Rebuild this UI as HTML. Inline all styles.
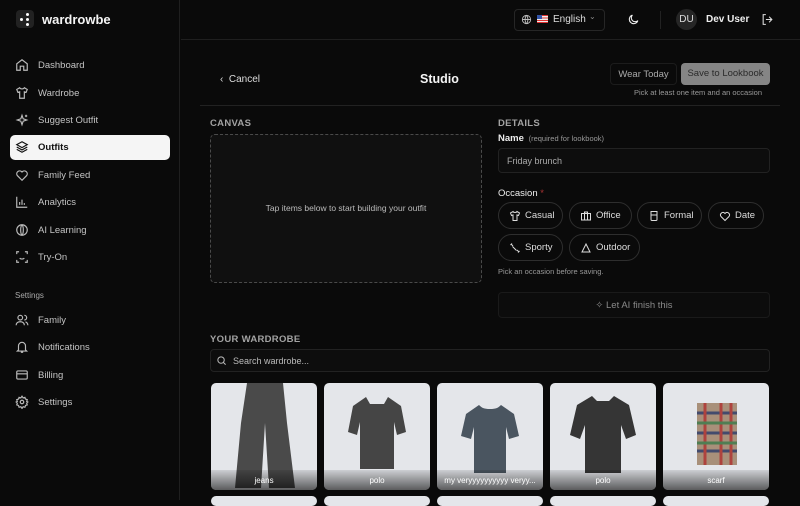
<!DOCTYPE html>
<html><head><meta charset="utf-8"><style>
*{box-sizing:border-box;margin:0;padding:0}
body{width:800px;height:500px;overflow:hidden;background:#0a0a0a;font-family:"Liberation Sans",sans-serif;color:#e5e5e5;position:relative}
.sb{position:absolute;left:0;top:0;width:180px;height:500px;border-right:1px solid #1f1f1f;background:#0a0a0a}
.logo{position:absolute;left:16px;top:10px;width:18px;height:18px;background:#222;border-radius:4px}
.brand{position:absolute;left:42px;top:12px;font-size:13px;font-weight:bold;color:#f5f5f5}
.nav{position:absolute;left:10px;width:160px;height:25px;border-radius:5px;font-size:9.5px;color:#c4c4c4;line-height:25px;padding-left:28px}
.nav svg{position:absolute;left:5px;top:5px}
.nav.act{background:#f5f5f5;color:#111;font-weight:bold}
.hdr{position:absolute;left:181px;top:0;right:0;height:40px;border-bottom:1px solid #1f1f1f}
.txt{position:absolute;white-space:nowrap}
.lbl{font-size:9.5px;font-weight:bold;color:#a3a3a3;letter-spacing:.3px}
.chip{position:absolute;height:27px;border:1px solid #2e2e2e;border-radius:14px;font-size:9.5px;color:#ddd;line-height:25px;padding-left:26px}
.chip svg{position:absolute;left:10px;top:7px}
.card{position:absolute;top:383px;width:106px;height:107px;border-radius:5px;background:#e4e6ea;overflow:hidden}
.card .cap{position:absolute;left:0;right:0;bottom:0;height:20px;background:linear-gradient(rgba(0,0,0,.1),rgba(0,0,0,.6));color:#fff;font-size:8px;text-align:center;line-height:22px}
.card2{position:absolute;top:496px;width:106px;height:10px;border-radius:5px;background:#e4e6ea}
</style></head><body>
<div class="sb">
 <div class="logo"><div style="position:absolute;left:4px;top:8px;width:3px;height:3px;background:#fff;border-radius:50%"></div><div style="position:absolute;left:10px;top:3px;width:3px;height:3px;background:#fff;border-radius:50%"></div><div style="position:absolute;left:10px;top:8px;width:3px;height:3px;background:#fff;border-radius:50%"></div><div style="position:absolute;left:10px;top:13px;width:3px;height:3px;background:#fff;border-radius:50%"></div></div>
 <div class="brand">wardrowbe</div>
 <div class="nav" style="top:53px"><svg width="14" height="14" viewBox="0 0 24 24" fill="none" stroke="#bbb" stroke-width="2"><path d="M3 10l9-7 9 7v11H15v-7H9v7H3z"/></svg>Dashboard</div>
 <div class="nav" style="top:81px"><svg width="14" height="14" viewBox="0 0 24 24" fill="none" stroke="#bbb" stroke-width="2"><path d="M8 3l-5 3 2 5 3-1v11h8V10l3 1 2-5-5-3c-1 2-3 2-4 2s-3 0-4-2z"/></svg>Wardrobe</div>
 <div class="nav" style="top:108px"><svg width="14" height="14" viewBox="0 0 24 24" fill="none" stroke="#bbb" stroke-width="2"><path d="M12 4l2 6 6 2-6 2-2 6-2-6-6-2 6-2zM19 3v4M17 5h4"/></svg>Suggest Outfit</div>
 <div class="nav act" style="top:135px"><svg width="14" height="14" viewBox="0 0 24 24" fill="none" stroke="#111" stroke-width="2"><path d="M12 3l9 5-9 5-9-5zM3 12l9 5 9-5M3 16l9 5 9-5"/></svg>Outfits</div>
 <div class="nav" style="top:163px"><svg width="14" height="14" viewBox="0 0 24 24" fill="none" stroke="#bbb" stroke-width="2"><path d="M12 21l-8-8a5 5 0 017-7l1 1 1-1a5 5 0 017 7z"/></svg>Family Feed</div>
 <div class="nav" style="top:190px"><svg width="14" height="14" viewBox="0 0 24 24" fill="none" stroke="#bbb" stroke-width="2"><path d="M3 3v18h18M8 17v-5M12 17V8M16 17v-3"/></svg>Analytics</div>
 <div class="nav" style="top:218px"><svg width="14" height="14" viewBox="0 0 24 24" fill="none" stroke="#bbb" stroke-width="2"><circle cx="12" cy="12" r="9"/><path d="M12 3c-3 3-3 15 0 18M12 3c3 3 3 15 0 18"/></svg>AI Learning</div>
 <div class="nav" style="top:245px"><svg width="14" height="14" viewBox="0 0 24 24" fill="none" stroke="#bbb" stroke-width="2"><path d="M3 7V3h4M17 3h4v4M21 17v4h-4M7 21H3v-4M8 14c2 2 6 2 8 0"/></svg>Try-On</div>
 <div class="txt" style="left:15px;top:291px;font-size:8px;color:#aaa">Settings</div>
 <div class="nav" style="top:308px"><svg width="14" height="14" viewBox="0 0 24 24" fill="none" stroke="#bbb" stroke-width="2"><circle cx="9" cy="8" r="4"/><path d="M2 21c0-4 3-6 7-6s7 2 7 6M16 4a4 4 0 010 8M22 21c0-3-2-5-4-6"/></svg>Family</div>
 <div class="nav" style="top:335px"><svg width="14" height="14" viewBox="0 0 24 24" fill="none" stroke="#bbb" stroke-width="2"><path d="M6 17V10a6 6 0 0112 0v7l2 2H4zM10 21h4"/></svg>Notifications</div>
 <div class="nav" style="top:363px"><svg width="14" height="14" viewBox="0 0 24 24" fill="none" stroke="#bbb" stroke-width="2"><rect x="3" y="5" width="18" height="14" rx="2"/><path d="M3 10h18"/></svg>Billing</div>
 <div class="nav" style="top:390px"><svg width="14" height="14" viewBox="0 0 24 24" fill="none" stroke="#bbb" stroke-width="2"><circle cx="12" cy="12" r="3"/><path d="M12 2l2 3 3-1 1 3 3 1-1 3 2 1-2 2 1 3-3 1-1 3-3-1-2 3-2-3-3 1-1-3-3-1 1-3-2-2 2-1-1-3 3-1 1-3 3 1z"/></svg>Settings</div>
</div>
<div class="hdr"></div>
<div style="position:absolute;left:514px;top:9px;width:91px;height:22px;border:1px solid #262626;border-radius:4px"></div>
<svg class="txt" style="left:521px;top:14px" width="11" height="11" viewBox="0 0 24 24" fill="none" stroke="#bbb" stroke-width="2"><circle cx="12" cy="12" r="9"/><path d="M3 12h18M12 3c-4 4-4 14 0 18M12 3c4 4 4 14 0 18"/></svg>
<div class="txt" style="left:537px;top:15px;width:11px;height:8px;background:repeating-linear-gradient(#d33 0 1.2px,#eee 1.2px 2.4px)"><div style="width:5px;height:4px;background:#35a"></div></div>
<div class="txt" style="left:553px;top:14px;font-size:10px;color:#ddd">English</div>
<div class="txt" style="left:589px;top:12px;font-size:8px;color:#888">⌄</div>
<svg class="txt" style="left:627px;top:13px" width="13" height="13" viewBox="0 0 24 24" fill="none" stroke="#eee" stroke-width="2"><path d="M20 14A8 8 0 1110 4a6 6 0 0010 10z"/></svg>
<div class="txt" style="left:660px;top:11px;width:1px;height:18px;background:#222"></div>
<div class="txt" style="left:676px;top:9px;width:21px;height:21px;border-radius:50%;background:#262626;font-size:10px;color:#ddd;text-align:center;line-height:21px">DU</div>
<div class="txt" style="left:706px;top:14px;font-size:10px;font-weight:bold;color:#eee">Dev User</div>
<svg class="txt" style="left:761px;top:13px" width="13" height="13" viewBox="0 0 24 24" fill="none" stroke="#ddd" stroke-width="2"><path d="M9 3H4v18h5M15 7l5 5-5 5M20 12H9"/></svg>

<div class="txt" style="left:220px;top:74px;font-size:10px;color:#ddd">‹&nbsp; Cancel</div>
<div class="txt" style="left:420px;top:72px;font-size:12.5px;font-weight:bold;color:#f5f5f5">Studio</div>
<div class="txt" style="left:610px;top:63px;width:67px;height:22px;border:1px solid #1c1c1c;border-radius:4px;font-size:9.5px;color:#aaa;text-align:center;line-height:21px">Wear Today</div>
<div class="txt" style="left:681px;top:63px;width:89px;height:22px;background:#858585;border-radius:4px;font-size:9.5px;color:#2a2a2a;text-align:center;line-height:22px">Save to Lookbook</div>
<div class="txt" style="left:634px;top:88px;font-size:7.5px;color:#999">Pick at least one item and an occasion</div>
<div class="txt" style="left:200px;top:105px;width:580px;height:1px;background:#222"></div>

<div class="txt lbl" style="left:210px;top:118px">CANVAS</div>
<div class="txt" style="left:210px;top:134px;width:272px;height:149px;border:1px dashed #4a4a4a;border-radius:5px;background:#101010"></div>
<div class="txt" style="left:210px;top:203px;width:272px;text-align:center;font-size:8.5px;color:#bbb">Tap items below to start building your outfit</div>

<div class="txt lbl" style="left:498px;top:118px">DETAILS</div>
<div class="txt" style="left:498px;top:133px;font-size:9.5px;font-weight:bold;color:#eee">Name <span style="font-size:7.5px;font-weight:normal;color:#999">&nbsp;(required for lookbook)</span></div>
<div class="txt" style="left:498px;top:148px;width:272px;height:25px;border:1px solid #222;border-radius:4px;background:#0d0d0d;font-size:9px;color:#aaa;padding-left:8px;line-height:24px">Friday brunch</div>
<div class="txt" style="left:498px;top:188px;font-size:9.5px;color:#eee">Occasion <span style="color:#a33">*</span></div>
<div class="chip" style="left:498px;top:202px;width:65px"><svg width="12" height="12" viewBox="0 0 24 24" fill="none" stroke="#ddd" stroke-width="2"><path d="M8 3l-5 3 2 5 3-1v11h8V10l3 1 2-5-5-3c-1 2-3 2-4 2s-3 0-4-2z"/></svg>Casual</div>
<div class="chip" style="left:569px;top:202px;width:63px"><svg width="12" height="12" viewBox="0 0 24 24" fill="none" stroke="#ddd" stroke-width="2"><rect x="3" y="7" width="18" height="13"/><path d="M9 7V4h6v3M9 7v13M15 7v13"/></svg>Office</div>
<div class="chip" style="left:637px;top:202px;width:65px"><svg width="12" height="12" viewBox="0 0 24 24" fill="none" stroke="#ddd" stroke-width="2"><path d="M6 3h12v16a2 2 0 01-2 2H8a2 2 0 01-2-2zM6 10h12"/></svg>Formal</div>
<div class="chip" style="left:708px;top:202px;width:56px"><svg width="12" height="12" viewBox="0 0 24 24" fill="none" stroke="#ddd" stroke-width="2"><path d="M12 21l-8-8a5 5 0 017-7l1 1 1-1a5 5 0 017 7z"/></svg>Date</div>
<div class="chip" style="left:498px;top:234px;width:65px"><svg width="12" height="12" viewBox="0 0 24 24" fill="none" stroke="#ddd" stroke-width="2"><path d="M4 4l4 4M16 16l4 4M7 9l8 8M6 3L3 6M21 18l-3 3"/></svg>Sporty</div>
<div class="chip" style="left:569px;top:234px;width:71px"><svg width="12" height="12" viewBox="0 0 24 24" fill="none" stroke="#ddd" stroke-width="2"><path d="M12 4l8 16H4z"/></svg>Outdoor</div>
<div class="txt" style="left:498px;top:267px;font-size:7.5px;color:#999">Pick an occasion before saving.</div>
<div class="txt" style="left:498px;top:292px;width:272px;height:26px;border:1px solid #1a1a1a;border-radius:4px;background:#0c0c0c;text-align:center;font-size:9.5px;color:#8a8a8a;line-height:25px">✧ Let AI finish this</div>

<div class="txt lbl" style="left:210px;top:334px">YOUR WARDROBE</div>
<div class="txt" style="left:210px;top:349px;width:560px;height:23px;border:1px solid #222;border-radius:4px;background:#0d0d0d;font-size:9px;color:#bbb;padding-left:22px;line-height:22px">Search wardrobe...</div>
<svg class="txt" style="left:216px;top:355px" width="11" height="11" viewBox="0 0 24 24" fill="none" stroke="#bbb" stroke-width="2.2"><circle cx="11" cy="11" r="7"/><path d="M16 16l5 5"/></svg>

<div class="card" style="left:211px"><svg width="106" height="107"><path d="M36 0h36l4 40 8 65H58L54 40 50 105H24l6-65z" fill="#4a4a4a"/></svg><div class="cap">jeans</div></div>
<div class="card" style="left:324px"><svg width="106" height="107"><path d="M42 14l-13 9-5 26 9 3 3-13v47h34V39l3 13 9-3-5-26-13-9-4 7h-14z" fill="#454545"/></svg><div class="cap">polo</div></div>
<div class="card" style="left:437px"><svg width="106" height="107"><path d="M42 22l-13 9-5 22 10 3 3-12v46h32V44l3 12 10-3-5-22-13-9c-3 3-5 4-11 4s-8-1-11-4z" fill="#4a5560"/></svg><div class="cap">my veryyyyyyyyyy veryy...</div></div>
<div class="card" style="left:550px"><svg width="106" height="107"><path d="M42 13l-15 9-7 30 10 4 5-14v48h36V42l5 14 10-4-7-30-15-9-5 5h-12z" fill="#353535"/></svg><div class="cap">polo</div></div>
<div class="card" style="left:663px"><svg width="106" height="107"><rect x="34" y="20" width="40" height="62" fill="#a8907a"/><g stroke-width="3" opacity=".8"><path d="M34 30h40M34 50h40M34 68h40" stroke="#2a3a6a"/><path d="M42 20v62M58 20v62M68 20v62" stroke="#b03030"/><path d="M34 40h40M34 60h40" stroke="#3a7a4a"/></g></svg><div class="cap">scarf</div></div>
<div class="card2" style="left:211px"></div><div class="card2" style="left:324px"></div><div class="card2" style="left:437px"></div><div class="card2" style="left:550px"></div><div class="card2" style="left:663px"></div>
</body></html>
